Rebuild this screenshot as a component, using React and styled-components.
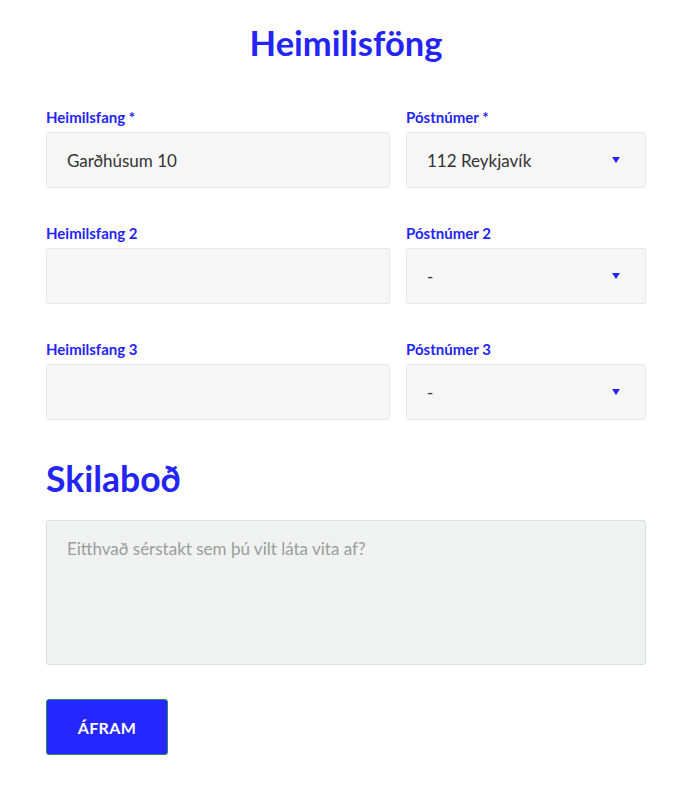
import React from "react";
import styled, { createGlobalStyle } from "styled-components";

const Global = createGlobalStyle`
  html, body { margin: 0; padding: 0; background: #fff; }
  body { font-family: "Lato", "Noto Sans", sans-serif; }
  * { box-sizing: border-box; }
`;

const BLUE = "#2424f6";

const Page = styled.div`
  width: 600px;
  margin-left: 46px;
  padding-top: 23px;
  padding-bottom: 32px;
  display: flex;
  flex-direction: column;
`;

const Title = styled.h1`
  margin: 0 0 45px;
  text-align: center;
  font-size: 34.5px;
  font-weight: 700;
  color: ${BLUE};
  line-height: 40px;
`;

const Grid = styled.div`
  display: grid;
  grid-template-columns: 344px 240px;
  column-gap: 16px;
  row-gap: 36px;
`;

const Field = styled.div`
  display: flex;
  flex-direction: column;
`;

const Label = styled.label`
  font-size: 15px;
  font-weight: 700;
  color: ${BLUE};
  line-height: 18px;
  margin-bottom: 6px;
`;

const Box = styled.div`
  height: 56px;
  background: #f6f6f6;
  border: 1px solid #e8e8e8;
  border-radius: 3px;
  display: flex;
  align-items: center;
  justify-content: space-between;
  padding: 0 20px 0 20px;
  font-size: 17px;
  color: #333;
`;

const Arrow = styled.span`
  width: 0;
  height: 0;
  border-left: 4.5px solid transparent;
  border-right: 4.5px solid transparent;
  border-top: 6px solid ${BLUE};
  margin-right: 5px;
`;

const Heading = styled.h2`
  margin: 38px 0 20px;
  font-size: 35.5px;
  font-weight: 700;
  color: ${BLUE};
  line-height: 42px;
`;

const TextArea = styled.div`
  height: 145px;
  background: #eff2f1;
  border: 1px solid #d9e0de;
  border-radius: 3px;
  padding: 17px 20px;
  font-size: 17px;
  color: #9a9d9c;
`;

const Button = styled.button`
  margin-top: 34px;
  align-self: flex-start;
  width: 122px;
  height: 56px;
  background: #2626ff;
  border: 1px solid #2f8a5a;
  border-radius: 3px;
  color: #fff;
  font-family: inherit;
  font-size: 16px;
  font-weight: 700;
  letter-spacing: 0.4px;
`;

const fields = [
  { l: "Heimilsfang *", v: "Garðhúsum 10", r: "Póstnúmer *", rv: "112 Reykjavík" },
  { l: "Heimilsfang 2", v: "", r: "Póstnúmer 2", rv: "-" },
  { l: "Heimilsfang 3", v: "", r: "Póstnúmer 3", rv: "-" },
];

export default function App() {
  return (
    <>
      <Global />
      <Page>
        <Title>Heimilisföng</Title>
        <Grid>
          {fields.map((f) => (
            <React.Fragment key={f.l}>
              <Field>
                <Label>{f.l}</Label>
                <Box>{f.v}</Box>
              </Field>
              <Field>
                <Label>{f.r}</Label>
                <Box>
                  <span>{f.rv}</span>
                  <Arrow />
                </Box>
              </Field>
            </React.Fragment>
          ))}
        </Grid>
        <Heading>Skilaboð</Heading>
        <TextArea>Eitthvað sérstakt sem þú vilt láta vita af?</TextArea>
        <Button>ÁFRAM</Button>
      </Page>
    </>
  );
}
